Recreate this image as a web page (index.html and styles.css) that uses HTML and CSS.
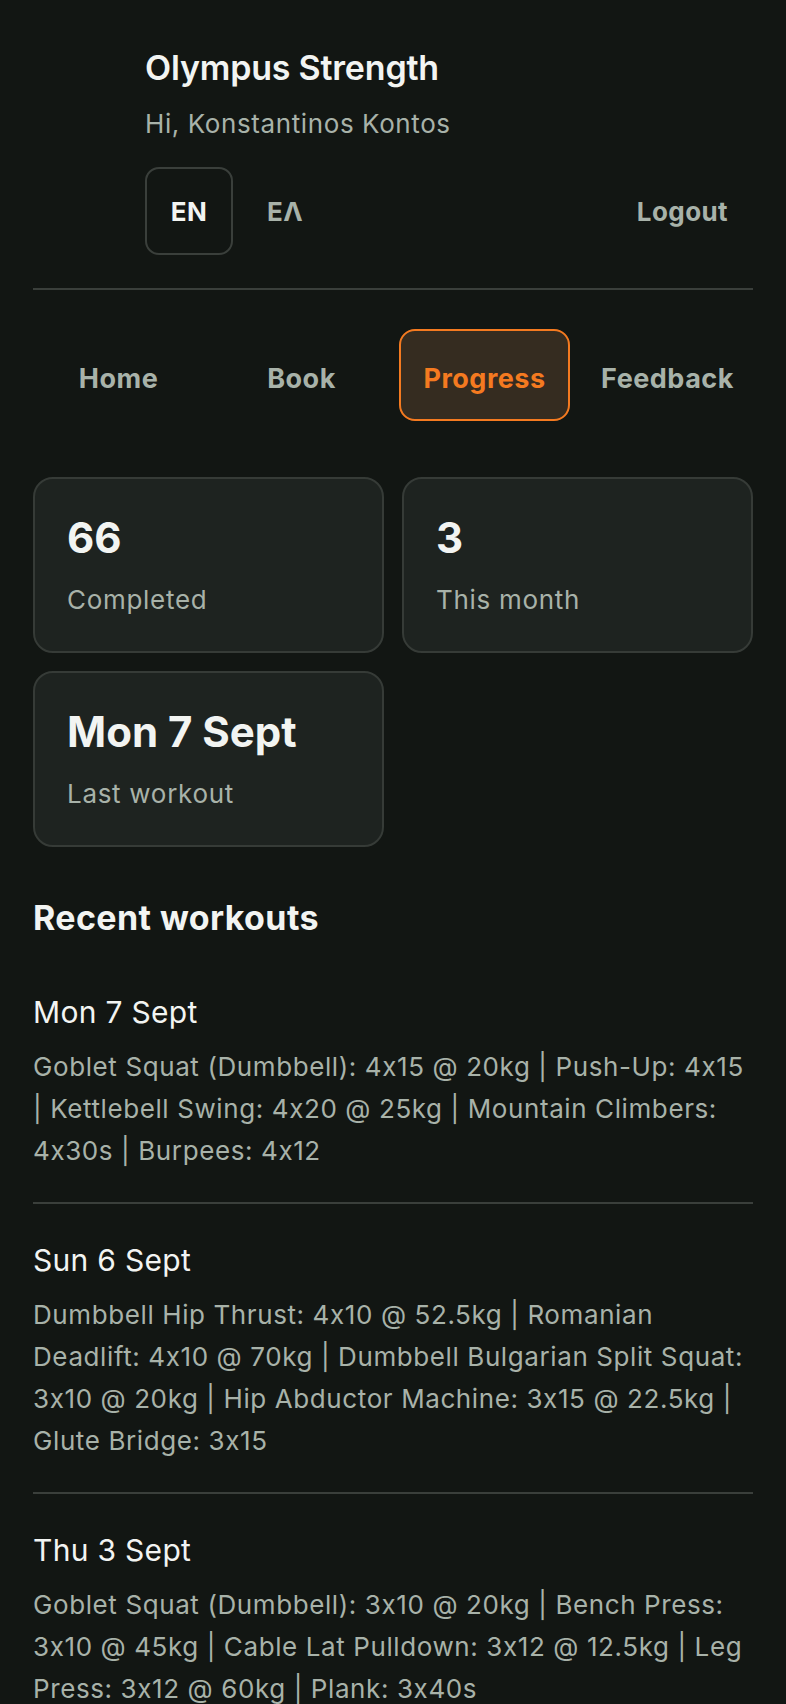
FILE: index.html
```html
<!DOCTYPE html>
<html lang="en">
<head>
  <meta charset="UTF-8">
  <meta name="viewport" content="width=device-width, initial-scale=1.0">
  <title>Progress - Olympus Strength</title>
  <link rel="stylesheet" href="styles.css">
</head>
<body>
  <div class="page">
    <header class="top">
      <h1 class="brand">Olympus Strength</h1>
      <p class="hello">Hi, Konstantinos Kontos</p>
      <div class="top-row">
        <div class="langs">
          <button class="lang active">EN</button>
          <button class="lang">EΛ</button>
        </div>
        <button class="logout">Logout</button>
      </div>
    </header>

    <nav class="tabs">
      <a class="tab" href="#">Home</a>
      <a class="tab" href="#">Book</a>
      <a class="tab active" href="#">Progress</a>
      <a class="tab" href="#">Feedback</a>
    </nav>

    <section class="stats">
      <div class="stat">
        <div class="stat-value">66</div>
        <div class="stat-label">Completed</div>
      </div>
      <div class="stat">
        <div class="stat-value">3</div>
        <div class="stat-label">This month</div>
      </div>
      <div class="stat">
        <div class="stat-value">Mon 7 Sept</div>
        <div class="stat-label">Last workout</div>
      </div>
    </section>

    <section class="recent">
      <h2>Recent workouts</h2>

      <div class="workout">
        <div class="workout-date">Mon 7 Sept</div>
        <p class="workout-desc">Goblet Squat (Dumbbell): 4x15 @ 20kg | Push-Up: 4x15 | Kettlebell Swing: 4x20 @ 25kg | Mountain Climbers: 4x30s | Burpees: 4x12</p>
      </div>

      <div class="workout">
        <div class="workout-date">Sun 6 Sept</div>
        <p class="workout-desc">Dumbbell Hip Thrust: 4x10 @ 52.5kg | Romanian Deadlift: 4x10 @ 70kg | Dumbbell Bulgarian Split Squat: 3x10 @ 20kg | Hip Abductor Machine: 3x15 @ 22.5kg | Glute Bridge: 3x15</p>
      </div>

      <div class="workout">
        <div class="workout-date">Thu 3 Sept</div>
        <p class="workout-desc">Goblet Squat (Dumbbell): 3x10 @ 20kg | Bench Press: 3x10 @ 45kg | Cable Lat Pulldown: 3x12 @ 12.5kg | Leg Press: 3x12 @ 60kg | Plank: 3x40s</p>
      </div>
    </section>
  </div>
</body>
</html>
```

FILE: styles.css
```css
body {
  margin: 0;
  background: #121613;
  color: #f2f4f2;
  font-family: 'Inter', 'Noto Sans', sans-serif;
  font-feature-settings: "calt" 0;
}

.page {
  padding: 0 33px 40px;
}

button {
  font-family: inherit;
  font-feature-settings: inherit;
  background: none;
  border: none;
  cursor: pointer;
}

/* header */
.top {
  padding: 48px 0 33px 112px;
  border-bottom: 2px solid #3a3f3b;
}

.brand {
  margin: 0;
  font-size: 34px;
  line-height: 40px;
  font-weight: 600;
  letter-spacing: -0.2px;
}

.hello {
  margin: 20px 0 0;
  font-size: 26px;
  line-height: 32px;
  letter-spacing: 0.6px;
  color: #a8b2a9;
}

.top-row {
  display: flex;
  justify-content: space-between;
  align-items: center;
  margin-top: 27px;
}

.langs {
  display: flex;
  gap: 8px;
}

.lang {
  width: 88px;
  height: 88px;
  border-radius: 14px;
  border: 2px solid transparent;
  font-size: 26px;
  font-weight: 700;
  letter-spacing: 0.4px;
  color: #a8b2a9;
}

.lang.active {
  border-color: #3a3f3b;
  color: #f2f4f2;
}

.logout {
  padding: 0 25px 0 0;
  font-size: 26px;
  font-weight: 700;
  letter-spacing: 0.4px;
  color: #a8b2a9;
}

/* tabs */
.tabs {
  display: grid;
  grid-template-columns: repeat(4, 1fr);
  gap: 12px;
  margin-top: 39px;
}

.tab {
  height: 92px;
  padding-top: 6px;
  display: flex;
  align-items: center;
  justify-content: center;
  box-sizing: border-box;
  border: 2px solid transparent;
  border-radius: 16px;
  font-size: 27px;
  font-weight: 700;
  letter-spacing: 0.5px;
  color: #a8b2a9;
  text-decoration: none;
}

.tab.active {
  border-color: #f47a20;
  background: #352c20;
  color: #f47a20;
}

/* stats */
.stats {
  display: grid;
  grid-template-columns: 1fr 1fr;
  gap: 18px;
  margin-top: 56px;
}

.stat {
  background: #1e2320;
  border: 2px solid #363b37;
  border-radius: 20px;
  padding: 35px 32px;
}

.stat-value {
  font-size: 42px;
  line-height: 48px;
  font-weight: 700;
}

.stat-label {
  margin-top: 22px;
  font-size: 26px;
  line-height: 32px;
  letter-spacing: 0.7px;
  color: #a8b2a9;
}

/* recent workouts */
.recent h2 {
  margin: 51px 0 18px;
  font-size: 34px;
  line-height: 40px;
  font-weight: 700;
  letter-spacing: 0.4px;
}

.workout {
  padding: 38px 0 30px;
  border-bottom: 2px solid #3a3f3b;
}

.workout-date {
  font-size: 30px;
  line-height: 36px;
  letter-spacing: 0.3px;
}

.workout-desc {
  margin: 16px 0 0;
  font-size: 26px;
  line-height: 42px;
  letter-spacing: 0.6px;
  color: #a8b2a9;
}
```
